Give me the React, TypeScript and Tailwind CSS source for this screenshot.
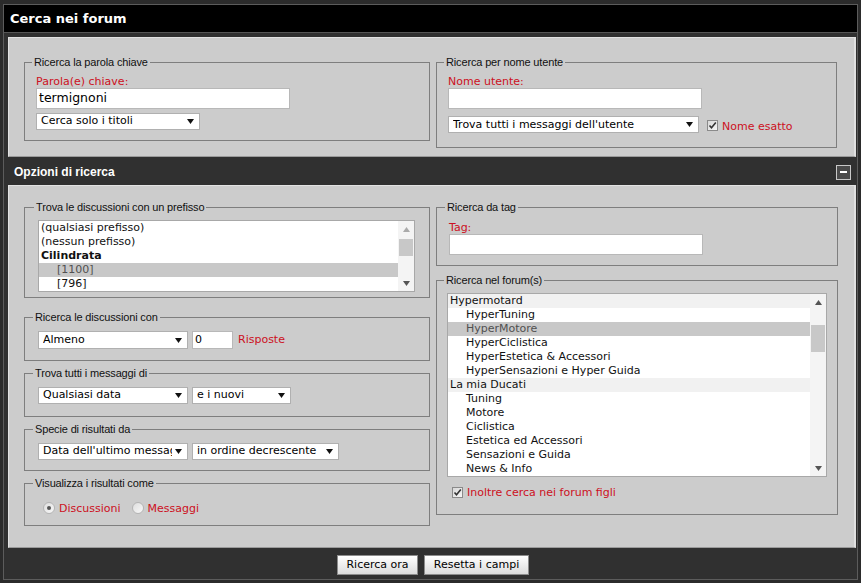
import React from "react";

const RED = "text-[#cc1022]";
const CTRL = "font-['DejaVu_Sans',Verdana,sans-serif]";
const LEG = "font-['Liberation_Sans',Arial,sans-serif]";

function Tri({ up = false, color = "#111" }: { up?: boolean; color?: string }) {
  return (
    <svg width="7" height="5" viewBox="0 0 7 5" className="shrink-0">
      <polygon points={up ? "0,5 7,5 3.5,0" : "0,0 7,0 3.5,5"} fill={color} />
    </svg>
  );
}

function Select({ className, text }: { className: string; text: string }) {
  return (
    <div
      className={
        "flex items-center bg-white border border-[#b0b0b0] pl-[4px] pr-[5px] text-[11px] text-black whitespace-nowrap " +
        CTRL +
        " " +
        className
      }
    >
      <span className="flex-1 min-w-0 overflow-hidden">{text}</span>
      <span className="ml-[3px]">
        <Tri />
      </span>
    </div>
  );
}

function Fieldset({
  legend,
  className,
  inner,
  legendClass = "ml-[7px]",
  children,
}: {
  legend: string;
  className: string;
  inner: string;
  legendClass?: string;
  children: React.ReactNode;
}) {
  return (
    <fieldset className={"border border-[#7e7e7e] " + className}>
      <legend
        className={
          "px-[2px] text-[11px] leading-[13px] tracking-[-0.15px] text-[#111] " + LEG + " " + legendClass
        }
      >
        {legend}
      </legend>
      <div className={inner}>{children}</div>
    </fieldset>
  );
}

function Check() {
  return (
    <div className="w-[11px] h-[11px] border border-[#8a8a8a] bg-gradient-to-br from-[#d8d8d8] to-[#f6f6f6] flex items-center justify-center shrink-0">
      <svg width="9" height="9" viewBox="0 0 9 9">
        <path d="M1.5 4.5 L3.5 6.8 L7.8 1.6" stroke="#333" strokeWidth="1.6" fill="none" />
      </svg>
    </div>
  );
}

function Radio({ on }: { on: boolean }) {
  return (
    <div className="w-[12px] h-[12px] rounded-full border border-[#b4b4b4] bg-gradient-to-br from-[#dedede] to-[#f8f8f8] flex items-center justify-center shrink-0">
      {on && <div className="w-[4px] h-[4px] rounded-full bg-[#555]" />}
    </div>
  );
}

function Scrollbar({
  upColor,
  thumbTop,
  thumbH,
}: {
  upColor: string;
  thumbTop: string;
  thumbH: string;
}) {
  return (
    <div className="w-[16px] flex flex-col bg-[#f4f4f4] shrink-0">
      <div className="h-[16px] flex items-center justify-center">
        <Tri up color={upColor} />
      </div>
      <div className="flex-1 flex flex-col items-center">
        <div className={"w-[14px] bg-[#c8c8c8] " + thumbTop + " " + thumbH} />
      </div>
      <div className="h-[16px] flex items-center justify-center">
        <Tri color="#555" />
      </div>
    </div>
  );
}

type Row = { t: string; indent?: boolean; bold?: boolean; sel?: boolean; cat?: boolean };

function Listbox({
  rows,
  className,
  upColor,
  thumbTop,
  thumbH,
}: {
  rows: Row[];
  className: string;
  upColor: string;
  thumbTop: string;
  thumbH: string;
}) {
  return (
    <div className={"flex bg-white border border-[#a8a8a8] " + className}>
      <div className="flex-1 flex flex-col">
        {rows.map((r, i) => (
          <div
            key={i}
            className={
              "h-[14px] leading-[14px] text-[11px] whitespace-nowrap " +
              CTRL +
              " " +
              (r.indent ? "pl-[18px] " : "pl-[2px] ") +
              (r.bold ? "font-bold text-[#111] " : "") +
              (r.sel ? "bg-[#c8c8c8] text-[#505050] " : r.cat ? "bg-[#f1f1f1] text-[#111] " : "text-[#111] ")
            }
          >
            {r.t}
          </div>
        ))}
      </div>
      <Scrollbar upColor={upColor} thumbTop={thumbTop} thumbH={thumbH} />
    </div>
  );
}

const prefixRows: Row[] = [
  { t: "(qualsiasi prefisso)" },
  { t: "(nessun prefisso)" },
  { t: "Cilindrata", bold: true },
  { t: "[1100]", indent: true, sel: true },
  { t: "[796]", indent: true },
];

const forumRows: Row[] = [
  { t: "Hypermotard", cat: true },
  { t: "HyperTuning", indent: true },
  { t: "HyperMotore", indent: true, sel: true },
  { t: "HyperCiclistica", indent: true },
  { t: "HyperEstetica & Accessori", indent: true },
  { t: "HyperSensazioni e Hyper Guida", indent: true },
  { t: "La mia Ducati", cat: true },
  { t: "Tuning", indent: true },
  { t: "Motore", indent: true },
  { t: "Ciclistica", indent: true },
  { t: "Estetica ed Accessori", indent: true },
  { t: "Sensazioni e Guida", indent: true },
  { t: "News & Info", indent: true },
];

function TextInput({ className, value }: { className: string; value?: string }) {
  return (
    <div
      className={
        "bg-white border border-[#b8b8b8] flex items-center pl-[2px] text-black " + CTRL + " " + className
      }
    >
      {value}
    </div>
  );
}

function Label({ children }: { children: React.ReactNode }) {
  return <div className={"text-[11px] leading-[13px] " + RED + " " + CTRL}>{children}</div>;
}

function Button({ className, children }: { className: string; children: React.ReactNode }) {
  return (
    <div
      className={
        "h-[20px] flex items-center justify-center border border-[#8c8c8c] bg-gradient-to-b from-[#ffffff] to-[#dcdcdc] text-[11px] text-black " +
        CTRL +
        " " +
        className
      }
    >
      {children}
    </div>
  );
}

export default function App() {
  return (
    <div className="w-[861px] h-[583px] bg-[#2b2b2b] overflow-hidden pt-[4px]">
      <div className="ml-[3px] w-[855px] border border-[#5c5c5c] bg-[#303030]">
        {/* title */}
        <div className="h-[28px] bg-black border-b border-[#555] flex items-center pl-[6px] pt-[1px]">
          <span className={"text-white font-bold text-[13px] " + CTRL}>Cerca nei forum</span>
        </div>

        <div className="pl-[4px] pr-[1px] pt-[4px]">
          {/* panel 1 */}
          <div className="h-[120px] bg-[#cccccc] border-t border-l border-[#e2e2e2] border-r-[2px] border-r-[#e0e0e0] border-b border-b-[#9a9a9a] flex pl-[15px] pt-[18px] gap-[6px] items-start">
            <Fieldset legend="Ricerca la parola chiave" className="w-[406px]" inner="pl-[11px] pt-[6px] pb-[10px]">
              <Label>Parola(e) chiave:</Label>
              <TextInput className="w-[254px] h-[21px] text-[12.5px]" value="termignoni" />
              <Select className="w-[164px] h-[17px] mt-[4px]" text="Cerca solo i titoli" />
            </Fieldset>
            <Fieldset legend="Ricerca per nome utente" className="w-[401px]" inner="pl-[11px] pt-[6px] pb-[11px]">
              <Label>Nome utente:</Label>
              <TextInput className="w-[254px] h-[21px]" />
              <div className="flex items-center mt-[5px]">
                <Select className="w-[251px] h-[17px]" text="Trova tutti i messaggi dell'utente" />
                <div className="ml-[8px] mt-[2px]">
                  <Check />
                </div>
                <span className={"ml-[4px] mt-[5px] text-[11px] " + RED + " " + CTRL}>Nome esatto</span>
              </div>
            </Fieldset>
          </div>

          {/* header */}
          <div className="h-[28px] flex items-center justify-between pl-[6px] pr-[5px] pt-[2px]">
            <span className={"text-white font-bold text-[12px] " + LEG}>Opzioni di ricerca</span>
            <div className="w-[15px] h-[15px] border border-[#c8c8c8] bg-[#4a4a4a] flex items-center justify-center">
              <div className="w-[7px] h-[2px] bg-white" />
            </div>
          </div>

          {/* panel 2 */}
          <div className="h-[363px] bg-[#cccccc] border-t border-l border-[#e2e2e2] border-r-[2px] border-r-[#e0e0e0] border-b border-b-[#9a9a9a] flex pl-[15px] pt-[15px] gap-[6px] items-start">
            <div className="flex flex-col w-[406px]">
              <Fieldset
                legend="Trova le discussioni con un prefisso"
                legendClass="ml-[9px]"
                className="w-[406px]"
                inner="pl-[13px] pr-[14px] pt-[6px] pb-[5px]"
              >
                <Listbox rows={prefixRows} className="h-[72px]" upColor="#aaaaaa" thumbTop="mt-[2px]" thumbH="h-[17px]" />
              </Fieldset>
              <Fieldset
                legend="Ricerca le discussioni con"
                legendClass="ml-[8px]"
                className="w-[406px] mt-[13px]"
                inner="pl-[13px] pt-[7px] pb-[11px]"
              >
                <div className="flex items-center">
                  <Select className="w-[150px] h-[18px]" text="Almeno" />
                  <TextInput className="w-[41px] h-[18px] ml-[4px] text-[11px]" value="0" />
                  <span className={"ml-[5px] text-[11px] " + RED + " " + CTRL}>Risposte</span>
                </div>
              </Fieldset>
              <Fieldset
                legend="Trova tutti i messaggi di"
                legendClass="ml-[8px]"
                className="w-[406px] mt-[6px]"
                inner="pl-[13px] pt-[7px] pb-[12px]"
              >
                <div className="flex items-center">
                  <Select className="w-[150px] h-[17px]" text="Qualsiasi data" />
                  <Select className="w-[99px] h-[17px] ml-[4px]" text="e i nuovi" />
                </div>
              </Fieldset>
              <Fieldset
                legend="Specie di risultati da"
                legendClass="ml-[8px]"
                className="w-[406px] mt-[6px]"
                inner="pl-[13px] pt-[7px] pb-[10px]"
              >
                <div className="flex items-center">
                  <Select className="w-[150px] h-[17px]" text="Data dell'ultimo messaggio" />
                  <Select className="w-[147px] h-[17px] ml-[4px]" text="in ordine decrescente" />
                </div>
              </Fieldset>
              <Fieldset
                legend="Visualizza i risultati come"
                legendClass="ml-[8px]"
                className="w-[406px] mt-[6px]"
                inner="pl-[18px] pt-[10px] pb-[9px]"
              >
                <div className={"flex items-center h-[16px] text-[11px] " + RED + " " + CTRL}>
                  <Radio on />
                  <span className="ml-[4px] mt-[2px]">Discussioni</span>
                  <span className="ml-[11px]">
                    <Radio on={false} />
                  </span>
                  <span className="ml-[4px] mt-[2px]">Messaggi</span>
                </div>
              </Fieldset>
            </div>

            <div className="flex flex-col w-[402px]">
              <Fieldset
                legend="Ricerca da tag"
                legendClass="ml-[8px]"
                className="w-[402px]"
                inner="pl-[12px] pt-[7px] pb-[10px]"
              >
                <Label>Tag:</Label>
                <TextInput className="w-[254px] h-[21px]" />
              </Fieldset>
              <Fieldset
                legend="Ricerca nel forum(s)"
                legendClass="ml-[7px]"
                className="w-[402px] mt-[8px]"
                inner="pl-[10px] pr-[10px] pt-[6px] pb-[12px]"
              >
                <Listbox rows={forumRows} className="h-[184px]" upColor="#555" thumbTop="mt-[15px]" thumbH="h-[27px]" />
                <div className="flex items-center mt-[6px] pl-[5px]">
                  <Check />
                  <span className={"ml-[4px] mt-[2px] text-[11px] " + RED + " " + CTRL}>Inoltre cerca nei forum figli</span>
                </div>
              </Fieldset>
            </div>
          </div>

          {/* bottom */}
          <div className="h-[31px] flex justify-center gap-[6px] pt-[7px] pl-[2px]">
            <Button className="w-[81px]">Ricerca ora</Button>
            <Button className="w-[105px]">Resetta i campi</Button>
          </div>
        </div>
      </div>
    </div>
  );
}
